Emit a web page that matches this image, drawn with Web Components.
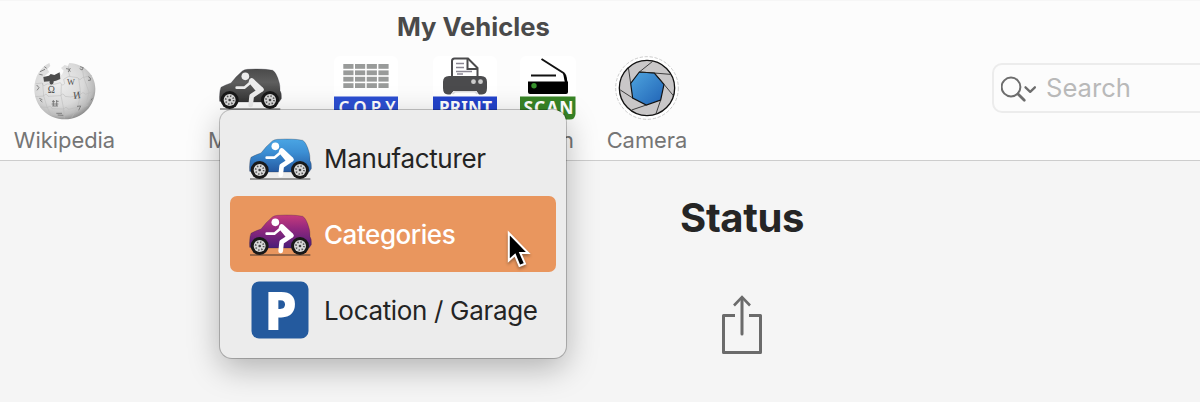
<!DOCTYPE html>
<html lang="en">
<head>
<meta charset="utf-8">
<title>My Vehicles</title>
<style>
  html, body {
    margin: 0;
    width: 1200px;
    height: 402px;
    overflow: hidden;
    font-family: Inter, "Liberation Sans", sans-serif;
  }
</style>
</head>
<body>
<vehicle-window heading="My Vehicles">
  <tool-item slot="tools" label="Wikipedia" style="width: 129px"><globe-icon></globe-icon></tool-item>
  <tool-item slot="tools" label="M" class="start" style="width: 84px; margin-left: 79px"><car-icon tone="dark"></car-icon></tool-item>
  <tool-item slot="tools" style="width: 64px; margin-left: 42px"><copy-icon></copy-icon></tool-item>
  <tool-item slot="tools" style="width: 64px; margin-left: 35px"><print-icon></print-icon></tool-item>
  <tool-item slot="tools" label="Scan" style="width: 56px; margin-left: 23px"><scan-icon></scan-icon></tool-item>
  <tool-item slot="tools" label="Camera" style="width: 80px; margin-left: 31px"><camera-icon></camera-icon></tool-item>
  <search-field slot="tools" placeholder="Search"></search-field>
  <status-panel heading="Status"><share-icon></share-icon></status-panel>
</vehicle-window>
<drop-menu>
  <menu-entry><car-icon slot="icon" tone="blue"></car-icon>Manufacturer</menu-entry>
  <menu-entry selected><car-icon slot="icon" tone="purple"></car-icon>Categories</menu-entry>
  <menu-entry><parking-icon slot="icon"></parking-icon>Location / Garage</menu-entry>
</drop-menu>
<mouse-pointer></mouse-pointer>

<script>
/**
 * Base class: renders the static template of the subclass.
 */
class BaseElement extends HTMLElement {
  constructor() {
    super();
    const shadowRoot = this.attachShadow({mode: 'open'});
    const template = document.createElement('template');
    template.innerHTML = this.render();
    shadowRoot.appendChild(template.content.cloneNode(true));
  }
}

/**
 * Window with a title, a toolbar and a content area.
 */
class VehicleWindow extends BaseElement {
  render() {
    return `
      <style>
        :host {
          display: grid;
          grid-template-rows: 161px 1fr;
          height: 402px;
          background: #f5f5f5;
        }

        header {
          box-sizing: border-box;
          background: #fcfcfc;
          border-top: 1px solid #f6f6f6;
          border-bottom: 1px solid #cdcdcd;
          overflow: hidden;
        }

        h1 {
          margin: 0 0 0 397px;
          height: 55px;
          font-size: 25.6px;
          line-height: 52px;
          font-weight: 700;
          color: #4a4a4a;
          white-space: nowrap;
        }

        nav {
          display: flex;
          align-items: flex-start;
        }
      </style>
      <header>
        <h1>${this.getAttribute('heading')}</h1>
        <nav><slot name="tools"></slot></nav>
      </header>
      <slot></slot>
    `;
  }
}

/**
 * Toolbar button: icon above its label.
 */
class ToolItem extends BaseElement {
  render() {
    return `
      <style>
        :host {
          display: flex;
          flex: none;
          flex-direction: column;
          align-items: center;
        }

        .icon {
          display: flex;
          height: 64px;
        }

        .label {
          font-size: 21.9px;
          line-height: 26px;
          margin-top: 7px;
          color: #757575;
          white-space: nowrap;
        }

        :host(.start) .label {
          align-self: flex-start;
        }
      </style>
      <div class="icon"><slot></slot></div>
      <div class="label">${this.getAttribute('label') || ''}</div>
    `;
  }
}

/**
 * Search field, runs off the right edge of the window.
 */
class SearchField extends BaseElement {
  render() {
    return `
      <style>
        :host {
          display: flex;
          flex: none;
          align-items: center;
          box-sizing: border-box;
          width: 260px;
          height: 50px;
          margin: 7px 0 0 305px;
          padding-left: 7px;
          border: 2px solid #ececec;
          border-radius: 10px;
        }

        svg {
          margin-top: 2px;
        }

        span {
          margin-left: 9px;
          font-size: 25.6px;
          line-height: 46px;
          margin-top: -1px;
          color: #b9b9b9;
        }
      </style>
      <svg width="36" height="27" viewBox="0 0 36 27" fill="none" stroke="#6d6d6d" stroke-linecap="round">
        <circle cx="10" cy="11" r="9.4" stroke-width="2"/>
        <path d="M17 18l6.3 6.3" stroke-width="2.8"/>
        <path d="M24.500 11.300l4.700 4.500 4.700-4.500" stroke-width="2.300" stroke-linejoin="round"/>
      </svg>
      <span>${this.getAttribute('placeholder')}</span>
    `;
  }
}

/**
 * Status column of the content area.
 */
class StatusPanel extends BaseElement {
  render() {
    return `
      <style>
        :host {
          display: flex;
          flex-direction: column;
          align-items: center;
          width: 300px;
          margin-left: 592px;
        }

        h2 {
          margin: 32px 0 0;
          height: 102px;
          font-size: 40px;
          line-height: 50px;
          font-weight: 700;
          letter-spacing: -0.4px;
          color: #252525;
        }
      </style>
      <h2>${this.getAttribute('heading')}</h2>
      <slot></slot>
    `;
  }
}

/**
 * Menu that opens over the window.
 */
class DropMenu extends BaseElement {
  render() {
    return `
      <style>
        :host {
          position: absolute;
          left: 220px;
          top: 110px;
          box-sizing: border-box;
          width: 346px;
          height: 248px;
          padding: 10px;
          background: #ececec;
          border-radius: 12px;
          box-shadow: 0 0 0 1px rgba(0,0,0,0.22), 0 10px 32px rgba(0,0,0,0.28);
        }
      </style>
      <slot></slot>
    `;
  }
}

/**
 * One row of the menu.
 */
class MenuEntry extends BaseElement {
  render() {
    return `
      <style>
        :host {
          display: flex;
          align-items: center;
          height: 76px;
          padding-left: 18px;
          border-radius: 7px;
          font-size: 26px;
          letter-spacing: -0.33px;
          color: #242424;
          white-space: nowrap;
        }

        :host([selected]) {
          background: #e9965e;
          color: #fff;
          font-weight: 500;
          letter-spacing: -0.45px;
        }

        .icon {
          display: flex;
          justify-content: center;
          width: 63px;
          margin-right: 13px;
        }
      </style>
      <div class="icon"><slot name="icon"></slot></div>
      <div><slot></slot></div>
    `;
  }
}

const carTones = {
  dark: ['#4a4a4a', '#5e5e5e', '#333333', '#ececec'],
  blue: ['#4aa5e4', '#3c8fd4', '#2458a0', '#ffffff'],
  purple: ['#c63b7c', '#94287e', '#4a1c78', '#ffffff'],
};

/**
 * Car with a rider, in one of the carTones.
 */
class CarIcon extends BaseElement {
  render() {
    const [top, middle, bottom, rider] = carTones[this.getAttribute('tone')];
    const wheel = (x) => `
      <circle cx="${x}" cy="136" r="27" fill="#191919"/>
      <circle cx="${x}" cy="136" r="18" fill="#d8d8d8"/>
      <circle cx="${x}" cy="136" r="12" fill="none" stroke="#555" stroke-width="5" stroke-dasharray="4 5.4"/>
      <circle cx="${x}" cy="136" r="4" fill="#444"/>
    `;
    return `
      <style>
        :host { display: block; padding-top: 2px; margin: 0 -1px 0 1px; }
        :host([tone="dark"]) { padding-top: 12px; margin: 0; }
        :host([tone="purple"]) { padding-top: 1px; }
        svg { display: block; }
      </style>
      <svg width="63" height="42" viewBox="26 40 189 126">
        <defs>
          <linearGradient id="paint" x1="0" y1="0" x2="0" y2="1">
            <stop offset="0" stop-color="${top}"/>
            <stop offset="0.4" stop-color="${middle}"/>
            <stop offset="1" stop-color="${bottom}"/>
          </linearGradient>
        </defs>
        <path d="M28 140Q26 112 32 98Q44 91 62 85Q78 64 96 49Q102 45 112 44Q158 41 187 47Q198 53 206 82Q209 90 209 108Q214 113 213 132L206 142H36Z" fill="url(#paint)" stroke="#2b2b35" stroke-opacity="0.55" stroke-width="1.5"/>
        ${wheel(58)}${wheel(179)}
        <g fill="none" stroke="${rider}" stroke-linecap="round" stroke-linejoin="round">
          <path d="M79 99H102L118 86" stroke-width="8"/>
          <path d="M124 78L152 104" stroke-width="15"/>
          <path d="M153 105L124 124L121 151" stroke-width="14"/>
          <path d="M119 82L140 107" stroke-width="8"/>
        </g>
        <circle cx="105" cy="65" r="11.5" fill="${rider}"/>
        <path d="M29 163H210" stroke="#222" stroke-width="2.5"/>
      </svg>
    `;
  }
}

/**
 * Blue parking sign.
 */
class ParkingIcon extends BaseElement {
  render() {
    return `
      <style>
        :host { display: block; }
        svg { display: block; }
        text { font-family: "Open Sans", "Noto Sans", sans-serif; font-weight: 800; fill: #fff; }
      </style>
      <svg width="58" height="58" viewBox="0 0 58 58">
        <rect x="0.5" y="0.5" width="57" height="57" rx="7.5" fill="#245a9e"/>
        <text x="13.500" y="48.500" font-size="53" textLength="32" lengthAdjust="spacingAndGlyphs">P</text>
      </svg>
    `;
  }
}

/**
 * Puzzle globe.
 */
class GlobeIcon extends BaseElement {
  render() {
    return `
      <style>
        :host { display: block; }
        svg { display: block; }
        text { font-family: "Liberation Serif", serif; fill: #4b4b4b; }
      </style>
      <svg width="64" height="66" viewBox="98 18 192 198">
        <defs>
          <radialGradient id="ball" cx="0.4" cy="0.35" r="0.68">
            <stop offset="0" stop-color="#efefef"/>
            <stop offset="0.6" stop-color="#d9d9d9"/>
            <stop offset="0.85" stop-color="#bcbcbc"/>
            <stop offset="1" stop-color="#898989"/>
          </radialGradient>
        </defs>
        <path d="M147 39L150 48L141 57L147 66L134 77L130 88L150 89L178 68L184 76L190 62L182 54L193 45L202 48L207 39C252 42 285 74 285 116C285 168 245 208 194 208C142 208 102 168 102 116C102 80 121 51 147 39Z" fill="url(#ball)"/>
        <path d="M129 81L146 77L151 72L162 75L178 67L180 87L167 92L160 94Q160 104 153 104Q146 103 148 94L131 95Z" fill="#4c4c4c"/>
        <g fill="none" stroke="#b9b9b9" stroke-width="1.600">
          <path d="M106 101L126 99Q128 112 136 104L143 101L150 106L180 98Q185 110 193 101L190 88L205 79L232 83Q238 94 246 83L275 76"/>
          <path d="M105 140L130 138Q137 127 143 139L181 137Q187 126 194 139L211 141L241 133Q248 123 255 133L282 123"/>
          <path d="M120 171L143 172Q151 164 155 176L190 177Q197 167 204 178L232 172Q243 160 249 171L264 165"/>
          <path d="M127 99L130 138L140 171L154 199M183 104L182 137L190 177L192 205M235 84L241 132L232 172L214 203M205 49Q200 65 209 79M246 54L250 82L266 126L256 169"/>
        </g>
        <text x="142" y="129" font-size="29">Ω</text>
        <text x="200" y="106" font-size="25">W</text>
        <text x="219" y="146" font-size="30" transform="rotate(-8 229 137)">И</text>
        <g fill="none" stroke="#707070" stroke-width="2.500">
          <path d="M155 155H164M168 154H175M159 150V168M169 150V168M154 162H174M156 168H173"/>
          <path d="M230 169L241 168L235 181M264 80L270 84V91L263 91M239 50L249 53L245 60L238 56M197 56L205 57L210 65M210 54L204 66M168 190H185M172 195L189 196M109 105L116 113L110 121M117 145L126 149M119 150L126 156M272 151L276 145M119 65L134 58M117 73L127 75M132 50L139 55"/>
        </g>
      </svg>
    `;
  }
}

/**
 * Shared look of the icons with a caption banner.
 */
const bannerStyle = `
  <style>
    :host { display: block; }
    svg { display: block; }
    text { font-family: "Noto Sans", "Open Sans", sans-serif; font-weight: 700; fill: #fff; }
  </style>
`;

class CopyIcon extends BaseElement {
  render() {
    let cells = '';
    for (let row = 0; row < 4; row++) {
      for (let col = 0; col < 4; col++) {
        cells += `<rect x="${9.3 + col * 11.7}" y="${8 + row * 6.4}" width="10.2" height="4.8"/>`;
      }
    }
    return `${bannerStyle}
      <svg width="64" height="64" viewBox="0 0 64 64">
        <rect width="64" height="64" rx="6" fill="#fff"/>
        <g fill="#999b9a">${cells}</g>
        <path d="M0 40.500H64V58Q64 64 58 64H6Q0 64 0 58Z" fill="#2c4fd2"/>
        <text x="4.500" y="58" font-size="17" style="font-weight: 600" textLength="57" lengthAdjust="spacing">COPY</text>
      </svg>
    `;
  }
}

class PrintIcon extends BaseElement {
  render() {
    return `${bannerStyle}
      <svg width="64" height="64" viewBox="0 0 64 64">
        <rect width="64" height="64" rx="6" fill="#fff"/>
        <path d="M10 26Q10 20 16 20H48Q54 20 54 26V32Q54 38.500 49 38.500H46L43.500 35H20.500L17.500 38.500H15Q10 38.500 10 32Z" fill="#4b4b4d"/>
        <path d="M19 20V5Q19 2.500 21.500 2.500H35L44.500 12V20" fill="#fff" stroke="#4b4b4d" stroke-width="2"/>
        <path d="M34.500 3V13H44.500" fill="none" stroke="#4b4b4d" stroke-width="2"/>
        <path d="M23 7.500H31M23 11.500H31M23 15.500H39M24 18H30" stroke="#8b8794" stroke-width="1.700"/>
        <path d="M19.500 38L22 35.800H42L44.500 38" fill="none" stroke="#ddd" stroke-width="1.600"/>
        <circle cx="40.500" cy="25.700" r="2.400" fill="#ccc"/>
        <circle cx="47.500" cy="25.700" r="2.400" fill="#ccc"/>
        <path d="M0 40.500H64V58Q64 64 58 64H6Q0 64 0 58Z" fill="#2343cb"/>
        <text x="6" y="58" font-size="17" textLength="53" lengthAdjust="spacing">PRINT</text>
      </svg>
    `;
  }
}

class ScanIcon extends BaseElement {
  render() {
    return `${bannerStyle}
      <svg width="56" height="64" viewBox="0 0 56 64">
        <rect width="56" height="64" rx="6" fill="#fff"/>
        <path d="M21.500 3L43.500 17Q46 19 46 25" fill="none" stroke="#111" stroke-width="2"/>
        <path d="M11 19.500H36" stroke="#111" stroke-width="2"/>
        <path d="M8 25.500H48V36Q48 38 46 38H10Q8 38 8 36Z"/>
        <path d="M43 17Q47 20 47.500 27H45Z"/>
        <circle cx="14" cy="29.800" r="2.700" fill="#37912c"/>
        <path d="M0 40.500H55.500V58Q55 63.500 50 63.500H6Q0 63.500 0 58Z" fill="#388426"/>
        <text x="3.500" y="58" font-size="17.500" textLength="50" lengthAdjust="spacing">SCAN</text>
      </svg>
    `;
  }
}

/**
 * Camera shutter with seven blades.
 */
class CameraIcon extends BaseElement {
  render() {
    return `
      <style>
        :host { display: block; }
        svg { display: block; }
      </style>
      <svg width="64" height="64" viewBox="45 18 192 192">
        <defs>
          <linearGradient id="lens" x1="0" y1="0" x2="1" y2="1">
            <stop offset="0" stop-color="#4fa5df"/>
            <stop offset="1" stop-color="#1f62b5"/>
          </linearGradient>
        </defs>
        <circle cx="141" cy="114" r="94" fill="#fff" stroke="#b4b4b4" stroke-width="2" stroke-dasharray="10 5"/>
        <circle cx="141" cy="114" r="83" fill="#c9c7c8" stroke="#111" stroke-width="4"/>
        <path d="M118 66L163 69L192 103L182 150L139 165L98 144L92 100Z" fill="url(#lens)" stroke="#111" stroke-width="3.500"/>
        <path d="M118 66L158 34M163 69L118 66M163 69L210 73M192 103L163 69M192 103L221 138M182 150L168 191M139 165L95 180M98 144L61 120M92 100L85 52" fill="none" stroke="#222" stroke-width="2.500"/>
      </svg>
    `;
  }
}

class ShareIcon extends BaseElement {
  render() {
    return `
      <style>
        :host { display: block; }
        svg { display: block; }
      </style>
      <svg width="42" height="60" viewBox="0 0 42 60" fill="none" stroke="#6b6b6b" stroke-width="3" stroke-linejoin="round">
        <path d="M14 20.500H2.500V57.500H39.500V20.500H28"/>
        <path d="M21 3V39" stroke-linecap="round"/>
        <path d="M13 10.500L21 2.200L29 10.500" stroke-width="2.600" stroke-linejoin="miter"/>
      </svg>
    `;
  }
}

class MousePointer extends BaseElement {
  render() {
    return `
      <style>
        :host {
          position: absolute;
          left: 505px;
          top: 229px;
          filter: drop-shadow(0 2px 1.5px rgba(0,0,0,0.35));
        }
        svg { display: block; }
      </style>
      <svg width="28" height="42" viewBox="0 0 28 42">
        <path d="M3.800 4V31.500L10 26L14.500 37L20 34.700L15.300 24H23.300Z" stroke="#fff" stroke-width="2"/>
      </svg>
    `;
  }
}

customElements.define('vehicle-window', VehicleWindow);
customElements.define('tool-item', ToolItem);
customElements.define('search-field', SearchField);
customElements.define('status-panel', StatusPanel);
customElements.define('drop-menu', DropMenu);
customElements.define('menu-entry', MenuEntry);
customElements.define('car-icon', CarIcon);
customElements.define('parking-icon', ParkingIcon);
customElements.define('globe-icon', GlobeIcon);
customElements.define('copy-icon', CopyIcon);
customElements.define('print-icon', PrintIcon);
customElements.define('scan-icon', ScanIcon);
customElements.define('camera-icon', CameraIcon);
customElements.define('share-icon', ShareIcon);
customElements.define('mouse-pointer', MousePointer);
</script>
</body>
</html>
